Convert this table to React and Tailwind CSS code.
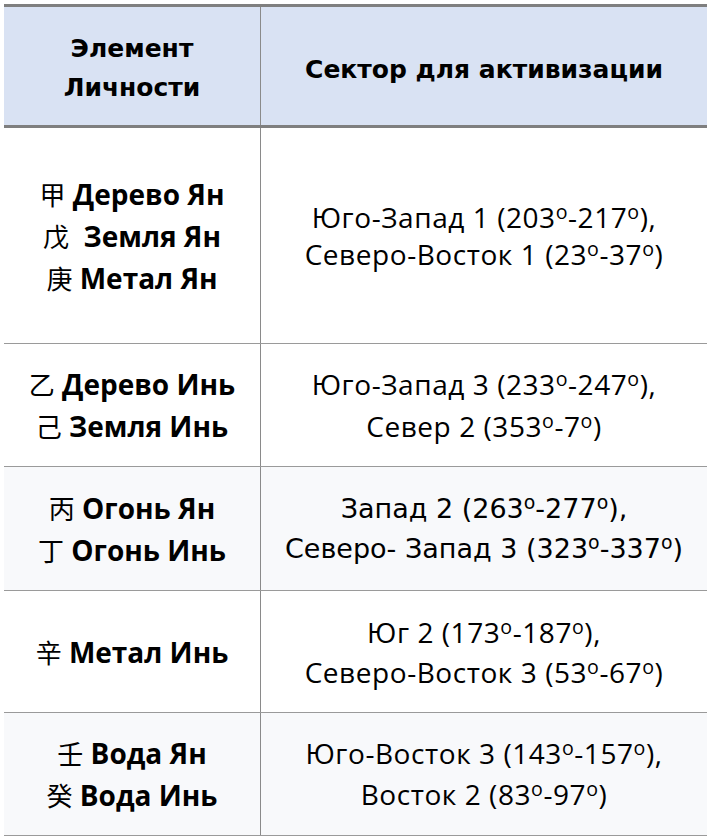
import React from 'react'

const rows = [
  {
    h: 'h-[216px]',
    bg: 'bg-white',
    lead: 'leading-[37px]',
    font: "font-['Open_Sans',sans-serif] text-[28px] tracking-[0.02em]",
    left: [
      ['甲', 'Дерево Ян'],
      ['戊', ' Земля Ян'],
      ['庚', 'Метал Ян'],
    ],
    right: [
      ['Юго-Запад 1 (203', '-217', '),'],
      ['Северо-Восток 1 (23', '-37', ')'],
    ],
  },
  {
    h: 'h-[123px]',
    bg: 'bg-white',
    lead: 'leading-[42px]',
    font: "font-['Open_Sans',sans-serif] text-[28px] tracking-[0.02em]",
    left: [
      ['乙', 'Дерево Инь'],
      ['己', 'Земля Инь'],
    ],
    right: [
      ['Юго-Запад 3 (233', '-247', '),'],
      ['Север 2 (353', '-7', ')'],
    ],
  },
  {
    h: 'h-[124px]',
    bg: 'bg-[#f8f9fb]',
    lead: 'leading-[40px]',
    font: "font-['DejaVu_Sans',sans-serif] text-[27px]",
    left: [
      ['丙', 'Огонь Ян'],
      ['丁', 'Огонь Инь'],
    ],
    right: [
      ['Запад 2 (263', '-277', '),'],
      ['Северо- Запад 3 (323', '-337', ')'],
    ],
  },
  {
    h: 'h-[122px]',
    bg: 'bg-white',
    lead: 'leading-[40px]',
    font: "font-['Open_Sans',sans-serif] text-[28px] tracking-[0.02em]",
    left: [['辛', 'Метал Инь']],
    right: [
      ['Юг 2 (173', '-187', '),'],
      ['Северо-Восток 3 (53', '-67', ')'],
    ],
  },
  {
    h: 'h-[123px]',
    bg: 'bg-[#f8f9fb]',
    lead: 'leading-[41px]',
    font: "font-['Open_Sans',sans-serif] text-[28px] tracking-[0.02em]",
    left: [
      ['壬', 'Вода Ян'],
      ['癸', 'Вода Инь'],
    ],
    right: [
      ['Юго-Восток 3 (143', '-157', '),'],
      ['Восток 2 (83', '-97', ')'],
    ],
  },
]

// raised small "o" used as the degree mark
function Deg() {
  return <span className="relative -top-[0.45em] text-[0.7em] leading-none">o</span>
}

export default function App() {
  return (
    <div className="w-[710px] h-[840px] bg-white pt-1 pl-1 font-['Open_Sans','Noto_Sans_CJK_SC',sans-serif] text-black">
      <div className="w-[703px] border-t-[3px] border-[#7f7f7f]">
        {/* header */}
        <div className="flex h-[121px] bg-[#d9e2f3] border-b-[3px] border-[#7f7f7f]">
          <div className="w-[256px] flex items-center justify-center text-center text-[25px] font-bold leading-[39px] pt-1 font-['DejaVu_Sans',sans-serif]">
            Элемент
            <br />
            Личности
          </div>
          <div className="flex-1 border-l border-[#8a8a8a] flex items-center justify-center text-[25px] font-bold font-['DejaVu_Sans',sans-serif] pt-2">
            Сектор для активизации
          </div>
        </div>

        {rows.map((r, i) => (
          <div key={i} className={`flex ${r.h} ${r.bg} border-b border-[#9a9a9a]`}>
            <div className="w-[256px] flex flex-col items-center justify-center text-[28px] font-bold leading-[41px]">
              {r.left.map(([ch, txt], j) => (
                <div key={j} className="whitespace-pre">
                  <span className="font-normal font-['Noto_Sans_CJK_SC',serif] text-[26px]">{ch}</span>
                  {' ' + txt}
                </div>
              ))}
            </div>
            <div className={`flex-1 border-l border-[#8a8a8a] flex flex-col items-center justify-center ${r.font} ${r.lead}`}>
              {r.right.map(([a, b, c], j) => (
                <div key={j} className="whitespace-pre">
                  {a}
                  <Deg />
                  {b}
                  <Deg />
                  {c}
                </div>
              ))}
            </div>
          </div>
        ))}
      </div>
    </div>
  )
}
